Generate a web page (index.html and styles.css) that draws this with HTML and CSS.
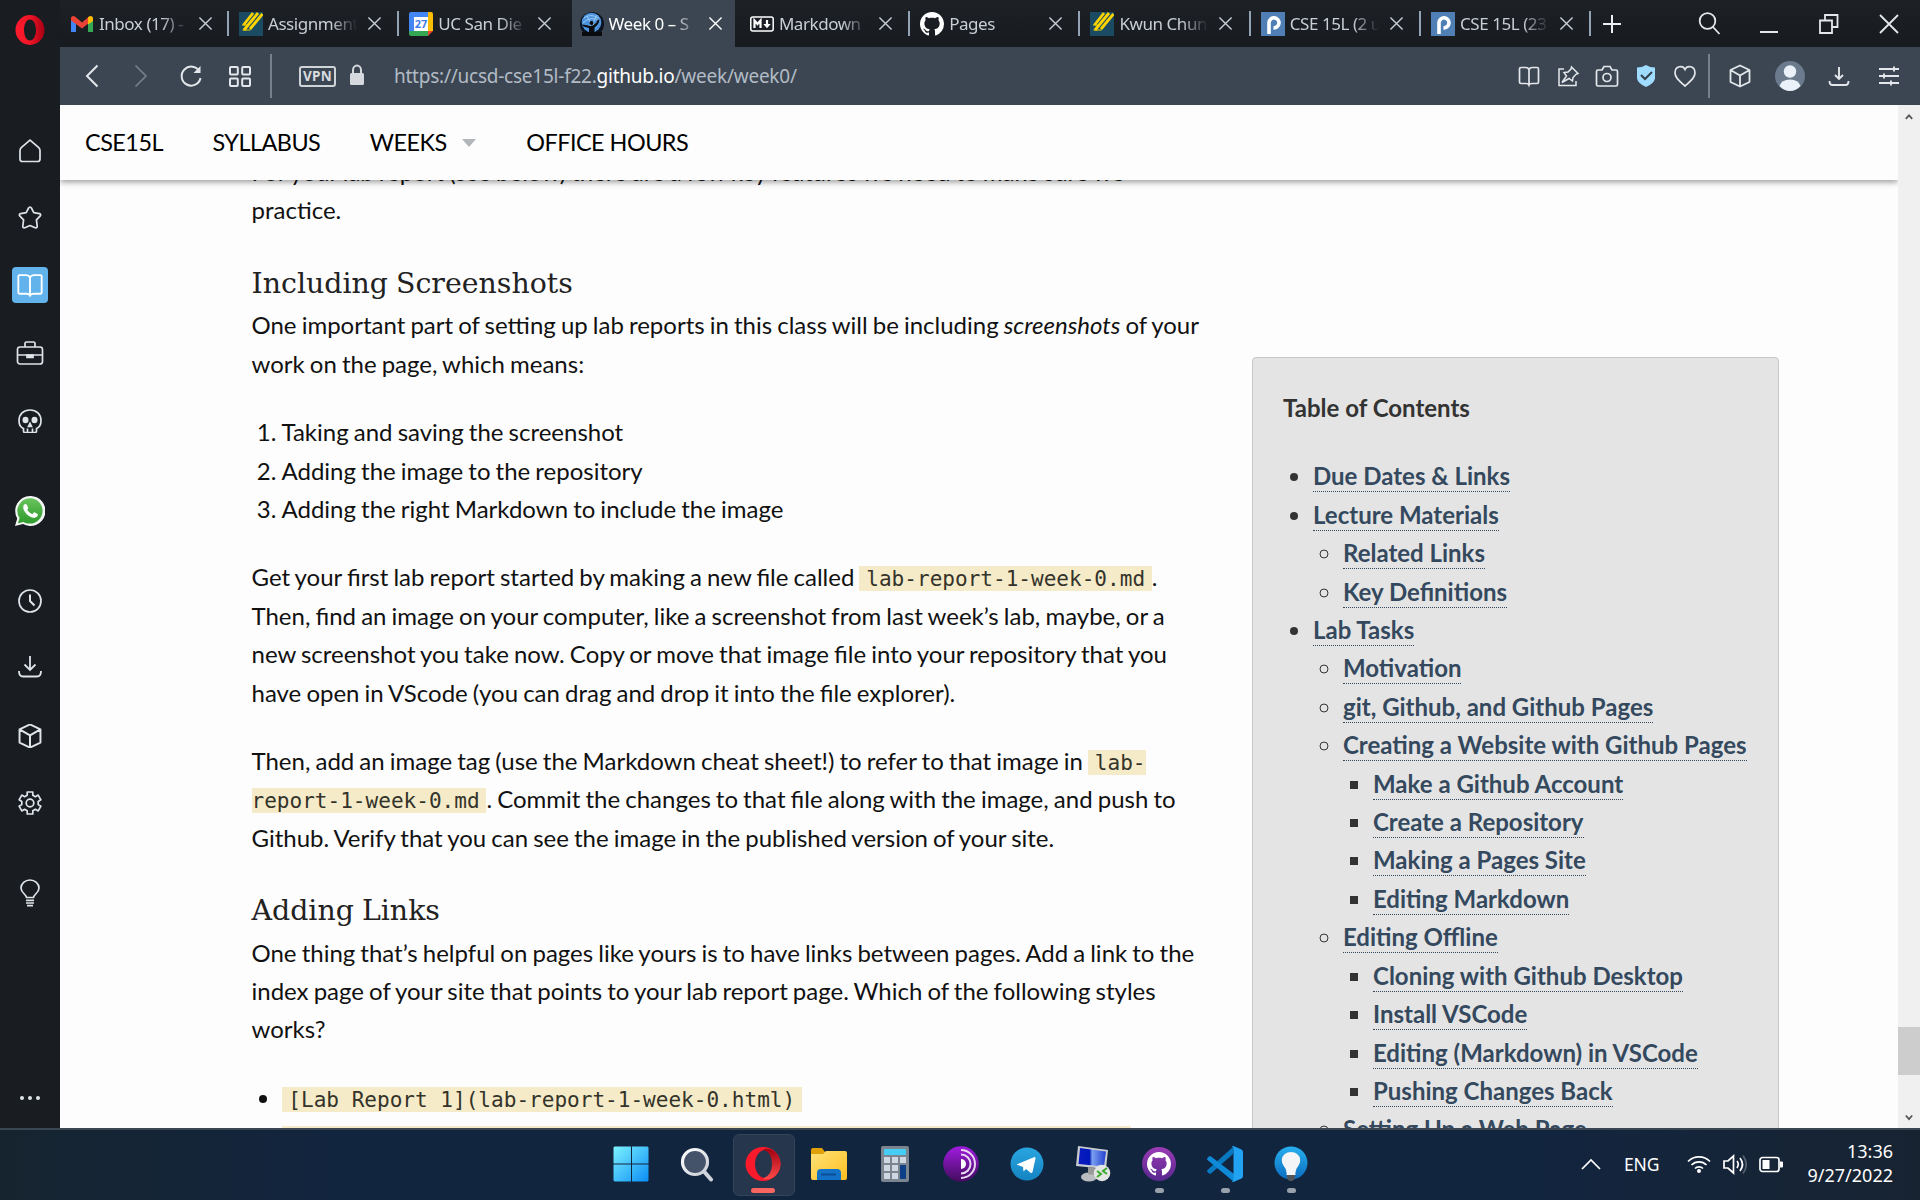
FILE: index.html
```html
<!DOCTYPE html>
<html lang="en">
<head>
<meta charset="utf-8">
<title>Week 0</title>
<link rel="stylesheet" href="styles.css">
</head>
<body>
<svg width="0" height="0" class="defs">
  <defs>
    <linearGradient id="gWin" x1="0" y1="0" x2="1" y2="1"><stop offset="0" stop-color="#7df3ff"/><stop offset="1" stop-color="#0a8df5"/></linearGradient>
    <linearGradient id="gOp" x1="0" y1="0" x2="1" y2="0"><stop offset="0" stop-color="#ff1b2d"/><stop offset=".5" stop-color="#f01526"/><stop offset="1" stop-color="#a70014"/></linearGradient>
    <linearGradient id="gOp2" x1="0" y1="0" x2="0" y2="1"><stop offset="0" stop-color="#a00010"/><stop offset="1" stop-color="#ff4b4b"/></linearGradient>
    <linearGradient id="gWa" x1="0" y1="0" x2="0" y2="1"><stop offset="0" stop-color="#68c45c"/><stop offset="1" stop-color="#2f9a2c"/></linearGradient>
    <linearGradient id="gFold" x1="0" y1="0" x2="1" y2="1"><stop offset="0" stop-color="#ffe27a"/><stop offset="1" stop-color="#ffbf1f"/></linearGradient>
    <linearGradient id="gTor" x1="0" y1="0" x2="0" y2="1"><stop offset="0" stop-color="#a01be0"/><stop offset="1" stop-color="#420c5d"/></linearGradient>
    <linearGradient id="gTg" x1="0" y1="0" x2="0" y2="1"><stop offset="0" stop-color="#2aa5e0"/><stop offset="1" stop-color="#1484c2"/></linearGradient>
    <linearGradient id="gMon" x1="0" y1="0" x2="1" y2="0"><stop offset="0" stop-color="#0a1cc0"/><stop offset=".4" stop-color="#0018b8"/><stop offset=".5" stop-color="#7aa0f0"/><stop offset="1" stop-color="#2440d0"/></linearGradient>
    <linearGradient id="gGh" x1="0" y1="0" x2="0" y2="1"><stop offset="0" stop-color="#9a3bb5"/><stop offset="1" stop-color="#57278e"/></linearGradient>
    <linearGradient id="gBulb" x1="0" y1="0" x2="0" y2="1"><stop offset="0" stop-color="#27b0ee"/><stop offset="1" stop-color="#0b6cc0"/></linearGradient>
    <linearGradient id="gLens" x1="0" y1="0" x2="1" y2="1"><stop offset="0" stop-color="#fff"/><stop offset="1" stop-color="#c8cdd4"/></linearGradient>
    <symbol id="x" viewBox="0 0 16 16"><path d="M1.500 1.500 14.500 14.500M14.500 1.500 1.500 14.500" fill="none" stroke="currentColor" stroke-width="1.500"/></symbol>
    <symbol id="cat" viewBox="0 0 16 16"><path fill="currentColor" d="M8 0C3.580 0 0 3.580 0 8c0 3.540 2.290 6.530 5.470 7.590.4.070.55-.17.55-.38 0-.19-.01-.82-.01-1.490-2.010.37-2.530-.49-2.690-.94-.09-.23-.48-.94-.82-1.130-.28-.15-.68-.52-.01-.53.63-.01 1.080.58 1.230.82.72 1.210 1.870.87 2.330.66.07-.52.28-.87.51-1.070-1.780-.2-3.640-.89-3.640-3.950 0-.87.31-1.590.82-2.150-.08-.2-.36-1.020.08-2.120 0 0 .67-.21 2.200.82.64-.18 1.320-.27 2-.27s1.360.09 2 .27c1.530-1.040 2.200-.82 2.200-.82.44 1.100.16 1.920.08 2.120.51.56.82 1.270.82 2.150 0 3.070-1.870 3.750-3.650 3.950.29.25.54.73.54 1.480 0 1.070-.01 1.930-.01 2.200 0 .21.15.46.55.38A8.010 8.010 0 0 0 16 8c0-4.420-3.580-8-8-8z"/></symbol>
    <symbol id="gs" viewBox="0 0 24 24"><rect width="24" height="24" fill="#1b4a63"/><g stroke="#ffd500" stroke-width="2.800" fill="none"><path d="M14 1 4.500 13M19 1 5 18M23.500 2 11 17"/></g><path d="M3 13h7M3.500 18h8" stroke="#ffd500" stroke-width="1"/></symbol>
    <symbol id="pz" viewBox="0 0 24 24"><rect width="24" height="24" fill="#4f7fb5"/><path d="M8 22V10.500a5 5 0 1 1 4.500 5.300" fill="none" stroke="#fff" stroke-width="3.600"/></symbol>
    <symbol id="cube" viewBox="0 0 24 24"><path d="M12 1.500 21.500 6v12L12 22.500 2.500 18V6zM2.500 6 12 11.500 21.500 6M12 11.500v11" fill="none" stroke="currentColor" stroke-width="1.800" stroke-linejoin="round"/></symbol>
    <symbol id="book" viewBox="0 0 24 24"><path d="M12 5.500C11 3.500 10 3.500 8.500 3.500H3a1 1 0 0 0-1 1v14a1 1 0 0 0 1 1h6c2 0 2.500.5 3 1.500.5-1 1-1.500 3-1.500h6a1 1 0 0 0 1-1v-14a1 1 0 0 0-1-1h-5.500c-1.500 0-2.500 0-3.500 2zv15" fill="none" stroke="currentColor" stroke-width="1.600"/></symbol>
    <symbol id="dl" viewBox="0 0 24 24"><path d="M12 1v13.500M6.500 9.500 12 15l5.500-5.500M1 16c0 4 1.500 5.500 4 5.500h14c2.500 0 4-1.500 4-5.500" fill="none" stroke="currentColor" stroke-width="1.800"/></symbol>
  </defs>
</svg>
<div class="screen">
  <div class="browser">
    <aside class="side">
      <svg class="si opera" viewBox="0 0 32 32"><path fill="url(#gOp)" fill-rule="evenodd" d="M16 1a14.500 15 0 1 0 0 30 14.500 15 0 1 0 0-30zm0 4.500c3.500 0 6 4.800 6 10.500s-2.500 10.500-6 10.500-6-4.800-6-10.500 2.500-10.500 6-10.500z"/></svg>
      <div class="sgroup ga">
        <svg class="ic" viewBox="0 0 24 24"><path d="M12 1.200 3.500 8.300Q2 9.600 2 11.500V20q0 2.500 2.500 2.500h15Q22 22.500 22 20v-8.500q0-1.900-1.500-3.200z"/></svg>
        <svg class="ic" viewBox="0 0 24 24"><path stroke-linejoin="round" d="M12 1q1 0 1.400 1l2.400 4.600 5.600 1q2 .6.900 2.300l-3.900 4 .8 6.300q0 2-2 1.500L12 19.500l-5.200 2.200q-2 .5-2-1.500l.8-6.300-3.900-4Q.600 8.200 2.600 7.600l5.600-1L10.600 2Q11 1 12 1z"/></svg>
        <div class="tile"><svg class="ic big" viewBox="0 0 24 24"><use href="#book"/></svg></div>
        <svg class="ic big" viewBox="0 0 28 28"><path d="M4 8h20a2.500 2.500 0 0 1 2.500 2.500v12A2.500 2.500 0 0 1 24 25H4a2.500 2.500 0 0 1-2.500-2.500v-12A2.500 2.500 0 0 1 4 8zM9 8V4.500Q9 3 10.500 3h7Q19 3 19 4.500V8M1.500 16h25"/><path d="M11 16h6v2.500h-6z" fill="currentColor"/></svg>
        <svg class="ic" viewBox="0 0 24 24"><path d="M5.500 19.500C2.500 18.500 1 15 1 11.500 1 5 5.500 1 12 1s11 4 11 10.500c0 3.500-1.500 7-4.500 8V22q0 1.500-1.500 1.500H7Q5.500 23.500 5.500 22zM9.500 23v-3.500M14.500 23v-3.500"/><ellipse cx="7.500" cy="11" rx="3" ry="3.300" fill="currentColor" stroke="none"/><ellipse cx="16.500" cy="11" rx="3" ry="3.300" fill="currentColor" stroke="none"/><path d="M10.500 17.500 12 14.500l1.500 3z" fill="currentColor"/></svg>
      </div>
      <svg class="wa" viewBox="0 0 30 30"><path fill="#f2f5f2" d="M15 0a15 15 0 1 1-7 28L0 30l2.200-7.500A15 15 0 0 1 15 0z"/><path fill="url(#gWa)" d="M15 2.200a12.700 12.700 0 1 1-6.500 23.700L3 27.200l1.600-5.200A12.700 12.700 0 0 1 15 2.200z"/><path fill="#fff" d="M8.500 9.500q2-2.500 3.500-.5l1.200 2.800q.2.700-1 2 1.500 3 5 4.400l1.500-1.700q.6-.5 1.200 0l2.800 1.400q.8 3-3.500 4-6-.500-10.200-7.500-1.200-2.500-.5-4.900z"/></svg>
      <div class="sgroup gb">
        <svg class="ic" viewBox="0 0 24 24"><circle cx="12" cy="12" r="11"/><path d="M12 5.500V12l4.500 4.500" stroke-width="2"/></svg>
        <svg class="ic" viewBox="0 0 24 24"><use href="#dl" y="-1"/></svg>
        <svg class="ic" viewBox="0 0 24 24"><use href="#cube" x="-1.200" y="-1.200" width="26.400" height="26.400"/></svg>
        <svg class="ic" viewBox="0 0 24 24"><path stroke-linejoin="round" d="M9.200 1h5.600v3.200l2.600 1.500 2.800-1.600 2.700 4.700L20.200 10.400v3.200l2.700 1.600-2.700 4.700-2.800-1.600-2.600 1.500V23H9.200v-3.200l-2.600-1.500-2.800 1.600-2.700-4.700 2.700-1.600v-3.200L1.100 8.800l2.700-4.700 2.800 1.600 2.600-1.500z"/><circle cx="12" cy="12" r="3.800"/></svg>
      </div>
      <svg class="ic bulb" viewBox="0 0 20 28"><path d="M6.500 18.500C6.500 15.500 1 14 1 9a9 8 0 0 1 18 0c0 5-5.500 6.500-5.500 9.500zM6 21.300h8M6 24h8M7 26.700h6"/></svg>
      <svg class="ic dots" viewBox="0 0 24 24"><g fill="currentColor" stroke="none"><circle cx="4" cy="12" r="2"/><circle cx="12" cy="12" r="2"/><circle cx="20" cy="12" r="2"/></g></svg>
    </aside>
    <div class="main">
      <div class="tabbar">
        <div class="tabs">
          <div class="tab first"><svg class="fav" viewBox="0 0 24 24"><path fill="#4285f4" d="M1 5v15h5V9z"/><path fill="#34a853" d="M23 5v15h-5V9z"/><path fill="#ea4335" d="M1 5.500Q2 3 5 4.500l7 6 7-6v6.500l-7 5.500L1 8.500z"/><path fill="#fbbc04" d="M18 5.200q4-2.500 5 .8V9l-5 3.500z"/></svg><span class="lbl">Inbox (17) -</span><svg class="cl"><use href="#x"/></svg></div>
          <div class="tab"><svg class="fav"><use href="#gs"/></svg><span class="lbl">Assignment</span><svg class="cl"><use href="#x"/></svg></div>
          <div class="tab last"><svg class="fav" viewBox="0 0 24 24"><path fill="#4285f4" d="M2 0h18v5H5v14H0V2Q0 0 2 0z"/><path fill="#fbbc04" d="M19 0h3q2 0 2 2v17h-5z"/><path fill="#34a853" d="M0 19h19v5H2q-2 0-2-2z"/><path fill="#ea4335" d="M19 19h5l-5 5z"/><path fill="#fff" d="M5 5h14v14H5z"/><text x="12" y="16.200" text-anchor="middle" class="cal">27</text></svg><span class="lbl">UC San Die</span><svg class="cl"><use href="#x"/></svg></div>
          <div class="tab active last"><svg class="fav" viewBox="0 0 24 24"><circle cx="12" cy="12" r="12" fill="#0b1320"/><circle cx="11.500" cy="10.500" r="9.800" fill="#4d94dc"/><path d="M4 6q6-5 15 0M3 11q8-8 17-2M7 4q4 5 4 12M17 3q-4 5-4 12" stroke="#a8d4fa" fill="none" stroke-width=".8"/><path d="M2.500 12.500q5 .5 7.500 1.500l3-.5q4-2.500 5-6l1.500.5q-1 5-5 7.500v8.500H9V16q-4-1-6.500-2z" fill="#0a0c10"/><circle cx="11.500" cy="11" r="2" fill="#0a0c10"/><path d="M2 20h7v4H2zM14 20h8v4h-8z" fill="#0a0c10"/></svg><span class="lbl">Week 0 – S</span><svg class="cl"><use href="#x"/></svg></div>
          <div class="tab"><svg class="fav" viewBox="0 0 24 24"><rect x=".8" y="5" width="22.400" height="14" rx="2" fill="#1b1f25" stroke="#fff" stroke-width="1.500"/><path d="M4.500 16V8.500l3 3.500 3-3.500V16M17 8v5" fill="none" stroke="#fff" stroke-width="2.200"/><path d="M13.300 12h7.400L17 16.200z" fill="#fff"/></svg><span class="lbl">Markdown</span><svg class="cl"><use href="#x"/></svg></div>
          <div class="tab"><svg class="fav white"><use href="#cat"/></svg><span class="lbl">Pages</span><svg class="cl"><use href="#x"/></svg></div>
          <div class="tab"><svg class="fav"><use href="#gs"/></svg><span class="lbl">Kwun Chun</span><svg class="cl"><use href="#x"/></svg></div>
          <div class="tab"><svg class="fav"><use href="#pz"/></svg><span class="lbl">CSE 15L (2 u</span><svg class="cl"><use href="#x"/></svg></div>
          <div class="tab"><svg class="fav"><use href="#pz"/></svg><span class="lbl">CSE 15L (23</span><svg class="cl"><use href="#x"/></svg></div>
        </div>
        <svg class="plus" viewBox="0 0 20 20"><path d="M10 1v18M1 10h18"/></svg>
        <div class="wins">
          <svg viewBox="0 0 24 24"><circle cx="10.500" cy="9" r="7.800"/><path d="m16 15 6.500 7"/></svg>
          <svg viewBox="0 0 24 24"><path d="M3 20h18" stroke-width="2"/></svg>
          <svg viewBox="0 0 24 24"><path d="M3 8.500h12V21H3zM8 8.500V3h12.500v12H15" stroke-width="1.800"/></svg>
          <svg viewBox="0 0 24 24"><path d="m3 3 18 18M21 3 3 21"/></svg>
        </div>
      </div>
      <div class="toolbar">
        <div class="tg left">
          <svg viewBox="0 0 24 24"><path d="M17.500 1.500 7 12l10.500 10.500" stroke-width="2"/></svg>
          <svg class="dim" viewBox="0 0 24 24"><path d="M6.500 1.500 17 12 6.500 22.500"/></svg>
          <svg viewBox="0 0 24 24"><path d="M20.500 7.500a9.500 9.500 0 1 0 1 6.500" stroke-width="2"/><path d="M21.500 2v7h-7z" fill="currentColor" stroke="none"/></svg>
          <svg viewBox="0 0 24 24"><g stroke-width="2"><rect x="2" y="3" width="7.800" height="7.500" rx="1"/><rect x="14.200" y="3" width="7.800" height="7.500" rx="1"/><rect x="2" y="14.500" width="7.800" height="7.500" rx="1"/><rect x="14.200" y="14.500" width="7.800" height="7.500" rx="1"/></g></svg>
        </div>
        <i class="bar"></i>
        <span class="vpn">VPN</span>
        <svg class="lock" viewBox="0 0 16 22"><path d="M4 10V6a4 4.500 0 0 1 8 0v4" fill="none" stroke="#d5d9de" stroke-width="2"/><rect x="1" y="9" width="14" height="12" rx="1.500" fill="#d5d9de"/></svg>
        <div class="url">https://ucsd-cse15l-f22.<b>github.io</b>/week/week0/</div>
        <div class="tg r1">
          <svg viewBox="0 0 24 24"><path d="M12 5.500Q11 3.500 9 3.500H4q-1.500 0-1.500 1.500v13q0 1.500 1.500 1.500h5q2.500 0 3 1.500.500-1.500 3-1.500h5q1.500 0 1.500-1.500V5q0-1.500-1.500-1.500h-5q-2 0-3 2zV21"/></svg>
          <svg viewBox="0 0 24 24"><path d="M8 5H3v16.500h17V17M15.500 3 22 9.500l-2 .8-3 3.200-.5 3.500-3.500-2.500-7 4 4.500-6.500L8 8.500l4-.5 3-3z" stroke-width="1.500"/></svg>
          <svg viewBox="0 0 24 24"><path d="M3 6h4l2-3.500h6L17 6h4q1.500 0 1.500 1.500v13q0 1.500-1.500 1.500H3q-1.500 0-1.500-1.500v-13Q1.500 6 3 6z"/><circle cx="12" cy="13.500" r="4"/></svg>
          <svg viewBox="0 0 24 24"><path d="M12 1q4 2.500 9 2.500v11q-1 5-9 8.500-8-3.500-9-8.500v-11Q8 3.500 12 1z" fill="#9fdcff" stroke="none"/><path d="m7 11 4 4 7-7" stroke="#34404c" stroke-width="2"/></svg>
          <svg viewBox="0 0 24 24"><path d="M12 5.500C10 1 2 1.500 2 9c0 5 5 8.500 10 13 5-4.500 10-8 10-13 0-7.500-8-8-10-3.500z"/></svg>
        </div>
        <i class="bar"></i>
        <div class="tg r2">
          <svg viewBox="0 0 24 24"><use href="#cube"/></svg>
          <svg class="ava" viewBox="0 0 30 30"><circle cx="15" cy="15" r="15" fill="#6b7b8d"/><circle cx="15" cy="10.500" r="6.200" fill="#eaf1f8"/><path d="M4.500 25q2-6.500 10.500-6.500T25.500 25Q21 30 15 30T4.500 25z" fill="#eaf1f8"/></svg>
          <svg viewBox="0 0 24 24"><path d="M12 3v12M8 11l4 4 4-4M2.500 17q0 4 3 4h13q3 0 3-4" stroke-width="1.900"/></svg>
          <svg viewBox="0 0 24 24"><path d="M2 5h20M2 12h20M2 19h20M17 2.500v5M7 9.500v5M14 16.500v5" stroke-width="1.900"/></svg>
        </div>
      </div>
      <div class="view">
        <div class="page">
          <nav class="nav"><span>CSE15L</span><span>SYLLABUS</span><span class="weeks">WEEKS<i></i></span><span>OFFICE HOURS</span></nav>
          <article class="art">
            <p>For your lab report (see below) there are a few key features we need to make sure we<br>practice.</p>
            <h3><span>Including Screenshots</span></h3>
            <p>One important part of setting up lab reports in this class will be including <em>screenshots</em> of your<br>work on the page, which means:</p>
            <ol><li>Taking and saving the screenshot</li><li>Adding the image to the repository</li><li>Adding the right Markdown to include the image</li></ol>
            <p>Get your first lab report started by making a new file called <code>lab-report-1-week-0.md</code>.<br>Then, find an image on your computer, like a screenshot from last week’s lab, maybe, or a<br>new screenshot you take now. Copy or move that image file into your repository that you<br>have open in VScode (you can drag and drop it into the file explorer).</p>
            <p>Then, add an image tag (use the Markdown cheat sheet!) to refer to that image in <code>lab-<br>report-1-week-0.md</code>. Commit the changes to that file along with the image, and push to<br>Github. Verify that you can see the image in the published version of your site.</p>
            <h3><span>Adding Links</span></h3>
            <p>One thing that’s helpful on pages like yours is to have links between pages. Add a link to the<br>index page of your site that points to your lab report page. Which of the following styles<br>works?</p>
            <ul><li><code>[Lab Report 1](lab-report-1-week-0.html)</code></li><li><code>[Lab Report 1](https://ucsd-cse15l-f22.github.io/lab-report-1-week</code></li></ul>
          </article>
          <div class="toc">
            <div>Table of Contents</div>
            <ul>
              <li><a>Due Dates &amp; Links</a></li>
              <li><a>Lecture Materials</a><ul><li><a>Related Links</a></li><li><a>Key Definitions</a></li></ul></li>
              <li><a>Lab Tasks</a><ul>
                <li><a>Motivation</a></li>
                <li><a>git, Github, and Github Pages</a></li>
                <li><a>Creating a Website with Github Pages</a><ul><li><a>Make a Github Account</a></li><li><a>Create a Repository</a></li><li><a>Making a Pages Site</a></li><li><a>Editing Markdown</a></li></ul></li>
                <li><a>Editing Offline</a><ul><li><a>Cloning with Github Desktop</a></li><li><a>Install VSCode</a></li><li><a>Editing (Markdown) in VSCode</a></li><li><a>Pushing Changes Back</a></li></ul></li>
                <li><a>Setting Up a Web Page</a></li>
              </ul></li>
            </ul>
          </div>
        </div>
        <div class="scroll">
          <svg viewBox="0 0 10 8"><path d="M1 7 5 2.500 9 7"/></svg>
          <div class="thumb"></div>
          <svg viewBox="0 0 10 8"><path d="M1 1.500 5 6 9 1.500"/></svg>
        </div>
      </div>
    </div>
  </div>
  <footer class="task">
    <div class="apps">
      <div class="app"><svg viewBox="0 0 36 36"><path fill="url(#gWin)" d="M1.500.5H18v17H.5v-16zM19 .5h15.500l1 1v16H19zM.5 18.500H18v17H1.500l-1-1zM19 18.500h16.500v16l-1 1H19z"/></svg></div>
      <div class="app"><svg viewBox="0 0 36 36"><circle cx="16" cy="16" r="12.500" fill="#44536a" stroke="url(#gLens)" stroke-width="3.200"/><path d="m25 25.500 7 8" stroke="#d0d4da" stroke-width="4" stroke-linecap="round"/></svg></div>
      <div class="app on"><svg viewBox="0 0 36 36"><path fill="#fa1a2c" fill-rule="evenodd" d="M18 1a17.500 17 0 1 0 0 34 17.500 17 0 1 0 0-34zm2 3c5 0 8 6 8 14s-3 14-8 14-10-6-10-14S15 4 20 4z"/><path fill="url(#gOp2)" d="M18 3.500C26 0 35.500 8 35.500 18S26 36 18 32.500q9-3 9-14.500T18 3.500z"/></svg><i></i></div>
      <div class="app"><svg viewBox="0 0 36 36"><path fill="#e0a008" d="M0 4q0-2 2-2h9l3 4v5H0z"/><path fill="url(#gFold)" d="M0 8h12l3-3h19q2 0 2 2v25q0 2-2 2H2q-2 0-2-2z"/><path fill="#1272c8" d="M6 34V27q0-4 4-4h16q4 0 4 4v7z"/><path fill="#0b4c92" d="M10 27.500h15v2H10z"/></svg></div>
      <div class="app"><svg viewBox="0 0 36 36"><rect x="4" width="28" height="36" rx="2" fill="#7b858f"/><rect x="7" y="3" width="22" height="6" fill="#45cdf5"/><g fill="#cfd8e2"><path d="M7 11h6v6H7zM15 11h6v6h-6zM23 11h6v6h-6zM7 19h6v6H7zM15 19h6v6h-6zM7 27h6v6H7zM15 27h6v6h-6z"/></g><path fill="#0d3f86" d="M23 19h6v14h-6z"/></svg></div>
      <div class="app"><svg viewBox="0 0 36 36"><circle cx="18" cy="18" r="17.800" fill="url(#gTor)"/><path d="M18 13a5 5 0 0 1 0 10z" fill="#fff"/><path d="M18 8.500a9.500 9.500 0 0 1 0 19M18 4a14 14 0 0 1 0 28" fill="none" stroke="#e8d8f0" stroke-width="2"/></svg></div>
      <div class="app"><svg viewBox="0 0 36 36"><circle cx="18" cy="18" r="16.500" fill="url(#gTg)"/><path fill="#fff" d="m7.500 18.500 18-7.500q1.200 0 1 1.500L23.500 26q-.5 1.500-2 .7L17 23l-2.500 2.500-.5-4.500z"/></svg></div>
      <div class="app"><svg viewBox="0 0 36 36"><path fill="#c9cdd2" d="m3 0 30 4-2 19-30-3z"/><path fill="url(#gMon)" d="m5 2 26 3.500-2 15L3.500 18z"/><ellipse cx="14" cy="31" rx="8" ry="4.500" fill="#b9bcc0"/><path fill="#999" d="m13 21 7 1-1 7-6-1z"/><circle cx="27" cy="27" r="8.300" fill="#e4e6e4"/><path d="m22 25 4 3-4 3M32 22l-4 3 4 3" stroke="#3aa82e" stroke-width="2" fill="none"/></svg></div>
      <div class="app"><svg viewBox="0 0 36 36"><circle cx="18" cy="18" r="17" fill="url(#gGh)"/><svg x="6" y="6" width="24" height="24" class="white"><use href="#cat"/></svg></svg><i class="sm"></i></div>
      <div class="app"><svg viewBox="0 0 36 36"><path fill="#0878c0" d="M26 8 4 27.500q-1 .5-2 0L.5 26q-1-1 0-2L27 0z"/><path fill="#0e8ad8" d="M.5 12 2 10.500q1-.8 2 0L27 28v8L.5 14q-1-1 0-2z"/><path fill="#22a2f2" d="m26.500 0 8 3.500Q36 4.500 36 6v24q0 1.500-1.500 2.500l-8 3.500q-1.500 0-2-1 2 1 2-1.500V2.500Q26.500 0 24.500 1q.5-1 2-1z"/></svg><i class="sm"></i></div>
      <div class="app"><svg viewBox="0 0 36 36"><circle cx="18" cy="17" r="16.500" fill="url(#gBulb)"/><path fill="#f4f5f7" d="M13.500 29Q14 24 11 20.500 8.500 17 8.800 14a9.200 8 0 0 1 18.400 0q.3 3-2.200 6.500Q22 24 22.500 29z"/><path fill="#50555c" d="M13.500 29h9l-1 4-2 2h-3l-2-2z"/></svg><i class="sm"></i></div>
    </div>
    <div class="tray">
      <svg class="chev" viewBox="0 0 20 12"><path d="m1 11 9-9 9 9"/></svg>
      <span class="eng">ENG</span>
      <svg class="t3" viewBox="0 0 24 24"><path d="M1 9.500a15.500 15.500 0 0 1 22 0M4.500 13a10.500 10.500 0 0 1 15 0M8 16.500a5.700 5.700 0 0 1 8 0"/><circle cx="12" cy="19" r="2" fill="#fff" stroke="none"/></svg>
      <svg class="t3" viewBox="0 0 24 24"><path d="M1 9h4l5.500-5v17L5 16H1z"/><path d="M14 9q2.500 3 0 7M17 6q5 6.500 0 13"/><path d="M20 3.500q6.500 9 0 18" stroke="#56606e"/></svg>
      <svg class="t3" viewBox="0 0 24 24"><rect x="1" y="5.500" width="19" height="14" rx="2.500"/><path d="M3.500 8h7v9h-7zM21 9.500h2q1 0 1 1v4q0 1-1 1h-2z" fill="#fff" stroke="none"/></svg>
      <div class="clock">13:36<br>9/27/2022</div>
    </div>
  </footer>
</div>
</body>
</html>
```
FILE: styles.css
```css
* { box-sizing: border-box; }
body { margin: 0; overflow: hidden; }
.defs { position: absolute; }
svg { display: block; flex: none; }
.screen { width: 1920px; height: 1200px; display: flex; flex-direction: column; overflow: hidden; font-family: "Noto Sans", sans-serif; }
.browser { height: 1128px; display: flex; }

/* sidebar */
.side { width: 60px; background: #191c21; color: #dfe4e9; display: flex; flex-direction: column; align-items: center; }
.si { width: 32px; height: 32px; margin-top: 14px; }
.ic { width: 24px; height: 24px; fill: none; stroke: currentColor; stroke-width: 1.7; }
.ic.big { width: 28px; height: 28px; }
.sgroup { display: flex; flex-direction: column; align-items: center; }
.ga { margin-top: 93px; height: 294px; justify-content: space-between; }
.ga .tile { margin: -5px 0 -7px; }
.tile { width: 36px; height: 36px; border-radius: 4px; background: #62b2ec; color: #fff; display: flex; align-items: center; justify-content: center; }
.wa { width: 30px; height: 30px; margin-top: 63px; }
.gb { margin-top: 63px; height: 226px; justify-content: space-between; }
.bulb { width: 20px; height: 28px; margin-top: 64px; }
.dots { margin-top: 179px; }

.main { flex: 1; min-width: 0; display: flex; flex-direction: column; }

/* tab strip */
.tabbar { height: 47px; background: linear-gradient(#1d2126, #171a1f); display: flex; align-items: center; color: #c9ced4; }
.tabs { display: flex; height: 47px; }
.tab { width: 170.300px; height: 47px; display: flex; align-items: center; padding-left: 10px; position: relative; }
.tab.first { width: 169px; }
.tab::after { content: ""; position: absolute; right: 0; top: 11px; width: 2px; height: 25px; background: #94a3b3; }
.tab.last::after { display: none; }
.tab.active { color: #fff; background: linear-gradient(#3c4652, #3c4652) 2px 0 / 163px 47px no-repeat; }
.fav { width: 24px; height: 24px; margin-right: 5px; }
.white { color: #fff; }
.cal { font: bold 11px "Open Sans", sans-serif; fill: #3f7de8; }
.lbl { width: 95px; margin-right: 4px; overflow: hidden; white-space: nowrap; font-size: 17px; line-height: 24px; letter-spacing: -.45px; -webkit-mask-image: linear-gradient(90deg, #000 66%, transparent 94%); mask-image: linear-gradient(90deg, #000 66%, transparent 94%); }
.cl { width: 15px; height: 15px; }
.plus { width: 20px; height: 20px; margin-left: 11px; fill: none; stroke: #eceff2; stroke-width: 2; }
.wins { margin-left: 75px; display: flex; gap: 36px; }
.wins svg { width: 24px; height: 24px; fill: none; stroke: #e4e8ec; stroke-width: 1.8; }

/* address bar */
.toolbar { height: 58px; background: #3c4652; color: #e3e7eb; display: flex; align-items: center; padding-left: 20px; }
.tg { display: flex; align-items: center; }
.tg svg { width: 24px; height: 24px; fill: none; stroke: currentColor; stroke-width: 1.7; }
.tg.left { gap: 25.300px; width: 172px; }
.tg .dim { stroke: #76808b; }
.bar { width: 2px; height: 44px; background: #76808c; margin-left: 18px; flex: none; }
.vpn { width: 37px; height: 21px; margin-left: 27px; border: 2px solid #cfd4d9; border-radius: 3px; font: bold 13.500px/17px "Noto Sans", sans-serif; text-align: center; letter-spacing: .3px; color: #d8dce0; }
.lock { width: 16px; height: 22px; margin-left: 13px; margin-top: -2px; }
.url { width: 1122.500px; margin-left: 29px; font-size: 19px; letter-spacing: -.24px; color: #b2bbc5; white-space: nowrap; }
.url b { font-weight: 400; color: #fff; }
.r1 { gap: 15.200px; }
.r1 + .bar { margin-left: 11px; }
.r2 { margin-left: 18px; gap: 25.500px; }
.tg .ava { width: 30px; height: 30px; margin: 0 -3px; stroke: none; }

/* web page */
.view { flex: 1; display: flex; min-height: 0; background: #fdfdfd; }
.page { width: 1838px; position: relative; overflow: hidden; display: flex; align-items: flex-start; font: 24px/38.400px Lato, sans-serif; color: #111; }
.nav { position: absolute; inset: 0 0 auto 0; height: 75px; background: #fdfdfd; box-shadow: 0 2px 6px rgba(0,0,0,.4); z-index: 2; display: flex; align-items: center; padding-left: 25px; gap: 49.500px; color: #000; font-size: 23.400px; letter-spacing: -.5px; }
.weeks { display: flex; align-items: center; margin-right: 1px; }
.weeks i { border: 7.500px solid transparent; border-top: 8px solid #b1b6bb; border-bottom: 0; margin-left: 15px; }
.art { width: 961px; margin: 48px 0 0 191.500px; white-space: nowrap; word-spacing: -1.050px; }
.art p { margin: 0; }
.art p + p, .art ol + p { margin-top: 30px; }
.art ol, .art ul { margin: 30.300px 0 0; padding-left: 30px; }
.art h3 { margin: 35px 0 3.300px; height: 38px; font: 400 28.400px/38px "DejaVu Serif", serif; color: #222; word-spacing: -1px; }
code { font: 21.050px "DejaVu Sans Mono", monospace; line-height: 1; background: #f6ebc8; color: #33332b; padding: 0 6.800px; word-spacing: 0; }
.toc { width: 527px; height: 1000px; margin: 252px 0 0 39.500px; padding: 31px 30px; border: 1px solid #c8c8c8; border-radius: 4px; background: #e4e4e4; color: #333; font-weight: 700; white-space: nowrap; }
.toc ul { margin: 0; padding-left: 30px; }
.toc div + ul { margin-top: 30px; }
.toc a { color: #34495e; border-bottom: 1px dotted #34495e; padding-bottom: 1px; }
.scroll { width: 22px; background: #f0f0f0; display: flex; flex-direction: column; align-items: center; padding: 8px 0 6px; }
.scroll svg { width: 8px; height: 7px; fill: none; stroke: #555; stroke-width: 2.200; }
.thumb { width: 22px; height: 48px; background: #cdcdcd; margin: 907px 0 39px; }

/* taskbar */
.task { height: 72px; border-top: 2px solid #3b4653; background: linear-gradient(90deg, #16242f 0, #12253f 18%, #12253f 80%, #152438 90%, #172331 100%); display: flex; padding-left: 598px; color: #fff; }
.apps { display: grid; grid-template-columns: repeat(11, 66px); height: 70px; }
.app { display: flex; align-items: center; justify-content: center; position: relative; padding-bottom: 2px; }
.app > svg { width: 36px; height: 36px; z-index: 1; }
.app.on::before { content: ""; position: absolute; left: 3px; top: 4px; width: 60px; height: 60px; border-radius: 6px; background: #26364c; border: 1px solid #33435a; }
.app i { position: absolute; bottom: 7px; left: 50%; width: 24px; height: 5px; margin-left: -12px; border-radius: 3px; background: #f86460; }
.app i.sm { width: 9px; margin-left: -4.500px; background: #98a0ab; }
.tray { width: 312px; margin-left: auto; margin-right: 27px; display: flex; align-items: center; height: 68px; }
.tray svg { fill: none; stroke: #fff; stroke-width: 1.700; }
.chev { width: 20px; height: 12px; }
.eng { margin-left: 23px; width: 38px; font-size: 17.500px; letter-spacing: -.2px; }
.t3 { width: 24px; height: 24px; margin-right: 12px; }
.eng + .t3 { margin-left: 25px; }
.clock { flex: 1; text-align: right; font-size: 18px; line-height: 24px; margin-top: -2px; white-space: nowrap; }
```
